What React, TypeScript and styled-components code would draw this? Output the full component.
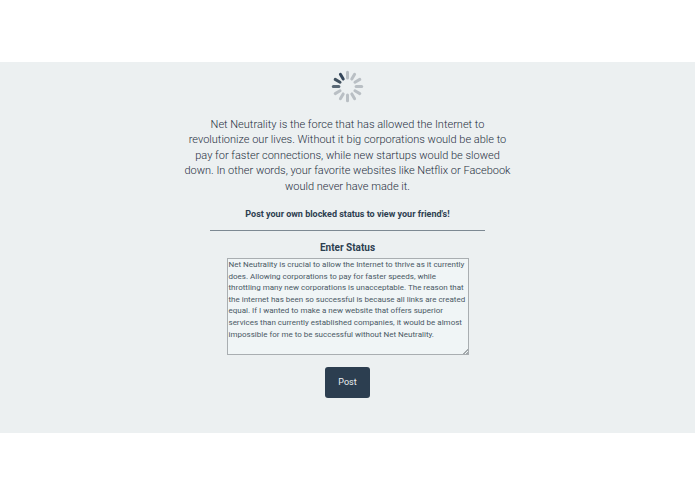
import React, { useState } from 'react';
import styled, { createGlobalStyle } from 'styled-components';

const GlobalStyle = createGlobalStyle`
  * { box-sizing: border-box; }
  body {
    margin: 0;
    background: #ffffff;
    color: #2c3e50;
    font-family: Roboto, 'Liberation Sans', sans-serif;
  }
`;

const Page = styled.div`
  padding: 62px 0;
`;

const Band = styled.main`
  display: flex;
  flex-direction: column;
  align-items: center;
  padding: 8px 16px 35px;
  background: #ecf0f1;
  text-align: center;
`;

const SpinnerIcon = styled.svg`
  display: block;
  width: 33px;
  height: 33px;
`;

const Intro = styled.p`
  width: 100%;
  max-width: 330px;
  margin: 14px 0 0;
  color: #1f2f3e;
  font-size: 11px;
  font-weight: 300;
  line-height: 1.4;
`;

const Callout = styled.p`
  margin: 14px 0 0;
  font-size: 9px;
  font-weight: 700;
  line-height: 12px;
`;

const Divider = styled.hr`
  width: 100%;
  max-width: 275px;
  margin: 10px 0;
  border: 0;
  border-top: 1px solid #7d8993;
`;

const StatusForm = styled.form`
  display: flex;
  flex-direction: column;
  align-items: center;
  width: 100%;
`;

const StatusLabel = styled.label`
  font-size: 10px;
  font-weight: 700;
  line-height: 14px;
`;

const StatusInput = styled.textarea`
  width: 100%;
  max-width: 242px;
  height: 97px;
  margin: 3px 0 12px;
  padding: 0 1px;
  border: 1px solid #a9aeb1;
  border-radius: 0;
  outline: none;
  background: #f0f5f6;
  color: #4a5965;
  font-family: inherit;
  font-size: 8px;
  font-weight: 400;
  line-height: 1.45;
  overflow: hidden;
  resize: both;

  &::-webkit-resizer {
    background: linear-gradient(
      135deg,
      transparent 82%,
      #a3a9ac 82% 87%,
      transparent 87% 92%,
      #a3a9ac 92%
    );
  }
`;

const PostButton = styled.button`
  min-width: 45px;
  padding: 8px 12px;
  border: 0;
  border-radius: 3px;
  background: #2c3e50;
  color: #ecf0f1;
  font-family: inherit;
  font-size: 9px;
  font-weight: 400;
  line-height: 15px;
  cursor: pointer;
`;

const spokeColors = [
  '#b9bfc4', '#b9bfc4', '#b9bfc4', '#b9bfc4', '#b9bfc4', '#b9bfc4',
  '#b9bfc4', '#b9bfc4', '#b9bfc4', '#5a6976', '#41515f', '#34465a',
];

function Spinner() {
  return (
    <SpinnerIcon viewBox="0 0 33 33" role="img" aria-label="Loading">
      {spokeColors.map((color, index) => (
        <line
          key={index}
          x1="16.5"
          y1="2.3"
          x2="16.5"
          y2="7.9"
          stroke={color}
          strokeWidth="3"
          strokeLinecap="round"
          transform={`rotate(${index * 30} 16.5 16.5)`}
        />
      ))}
    </SpinnerIcon>
  );
}

const initialStatus = [
  'Net Neutrality is crucial to allow the Internet to thrive as it currently',
  'does. Allowing corporations to pay for faster speeds, while',
  'throttling many new corporations is unacceptable. The reason that',
  'the internet has been so successful is because all links are created',
  'equal. If I wanted to make a new website that offers superior',
  'services than currently established companies, it would be almost',
  'impossible for me to be successful without Net Neutrality.',
].join('\n');

export default function App() {
  const [status, setStatus] = useState(initialStatus);

  return (
    <Page>
      <GlobalStyle />
      <Band>
        <Spinner />
        <Intro>
          Net Neutrality is the force that has allowed the Internet to
          <br />
          revolutionize our lives. Without it big corporations would be able to
          <br />
          pay for faster connections, while new startups would be slowed
          <br />
          down. In other words, your favorite websites like Netflix or Facebook
          <br />
          would never have made it.
        </Intro>
        <Callout>Post your own blocked status to view your friend's!</Callout>
        <Divider />
        <StatusForm onSubmit={(event: React.FormEvent) => event.preventDefault()}>
          <StatusLabel htmlFor="status">Enter Status</StatusLabel>
          <StatusInput
            id="status"
            spellCheck={false}
            value={status}
            onChange={(event) => setStatus(event.target.value)}
          />
          <PostButton type="submit">Post</PostButton>
        </StatusForm>
      </Band>
    </Page>
  );
}
